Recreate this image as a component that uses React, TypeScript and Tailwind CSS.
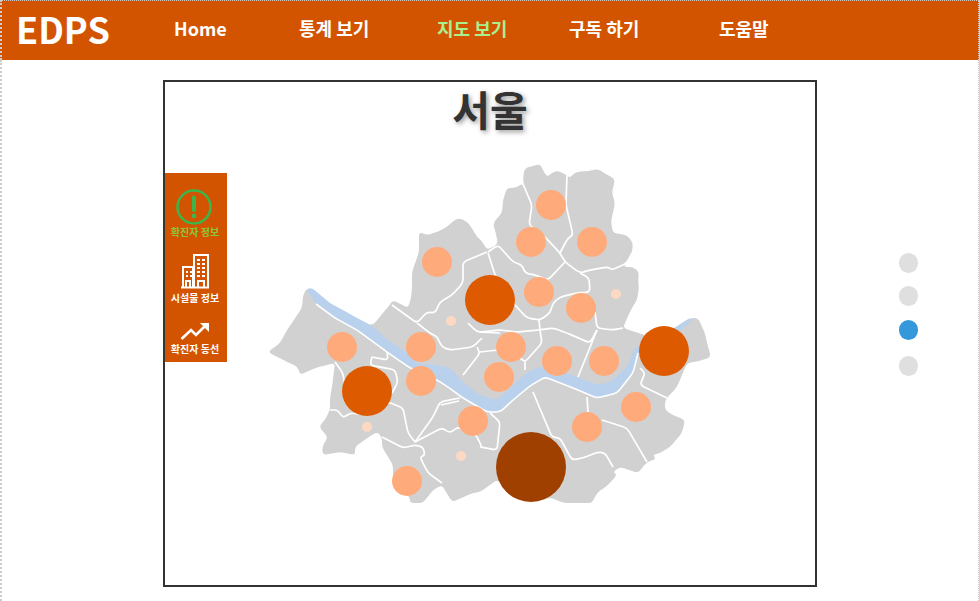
const navItems = [
  { label: "Home", width: "w-[125px]", active: false },
  { label: "통계 보기", width: "w-[138px]", active: false },
  { label: "지도 보기", width: "w-[132px]", active: true },
  { label: "구독 하기", width: "w-[150px]", active: false },
  { label: "도움말", width: "w-[100px]", active: false },
];

// rounds the corners of a hand traced outline so it doesn't look like a polygon
const rounded = (d: string) => {
  const closed = d.trim().endsWith("Z");
  const pts = (d.match(/-?\d+(\.\d+)?,-?\d+(\.\d+)?/g) ?? []).map((p) => p.split(",").map(Number));
  const n = pts.length;
  const cut = (a: number[], b: number[]) => {
    const len = Math.hypot(b[0] - a[0], b[1] - a[1]) || 1;
    const t = Math.min(0.45, 4 / len);
    return [a[0] + (b[0] - a[0]) * t, a[1] + (b[1] - a[1]) * t];
  };
  let out = "";
  pts.forEach((p, i) => {
    const prev = pts[(i - 1 + n) % n];
    const next = pts[(i + 1) % n];
    if (!closed && (i === 0 || i === n - 1)) {
      out += `${i === 0 ? "M" : "L"}${p[0]},${p[1]} `;
      return;
    }
    const a = cut(p, prev);
    const b = cut(p, next);
    out += `${i === 0 ? "M" : "L"}${a[0].toFixed(1)},${a[1].toFixed(1)} Q${p[0]},${p[1]} ${b[0].toFixed(1)},${b[1].toFixed(1)} `;
  });
  return closed ? out + "Z" : out;
};

const seoulOutline =
  "M419,232 L427,235 L437,232 L447,227 L453,221 L459,218 L466,221 L470,225 L477,237 L482,241 L487,250 L498,244 L496,234 L493,223 L502,213 L503,200 L507,188 L515,188 L522,184 L524,186 L523,177 L525,168 L533,166 L540,164 L543,170 L547,177 L553,172 L558,171 L567,175 L570,178 L575,172 L588,171 L598,169 L606,174 L615,179 L612,193 L615,203 L611,222 L613,233 L627,235 L633,243 L632,253 L623,267 L633,267 L639,272 L638,280 L639,288 L637,300 L632,308 L627,318 L623,328 L660,340 L675,328 L690,318 L698,318 L705,333 L707,343 L711,357 L700,361 L687,363 L682,375 L677,387 L665,400 L665,410 L673,415 L685,420 L682,433 L670,447 L660,453 L653,455 L656,459 L647,462 L638,473 L620,467 L613,472 L617,475 L608,485 L597,493 L592,503 L563,503 L552,498 L530,500 L497,480 L480,492 L473,493 L452,502 L442,485 L433,490 L423,503 L410,503 L410,497 L400,490 L393,480 L393,465 L382,447 L382,437 L377,432 L367,438 L355,447 L355,455 L340,452 L323,455 L322,447 L328,437 L319,427 L326,418 L330,410 L330,398 L332,387 L335,363 L315,368 L300,375 L298,367 L283,360 L268,352 L280,343 L287,330 L302,308 L303,295 L307,288 L340,320 L373,325 L388,307 L393,300 L408,308 L411,298 L412,288 L412,272 L419,252 Z";

const riverShape =
  "M306,289 L312,288 L330,303 L350,314 L372,326 L388,340 L407,353 L418,364 L432,364 L450,368 L466,385 L480,395 L497,400 L510,388 L525,374 L538,367 L567,373 L597,385 L610,382 L627,367 L635,347 L650,345 L677,326 L690,318 L692,320 L680,331 L660,352 L638,353 L633,373 L617,393 L597,398 L573,388 L545,377 L530,386 L513,400 L500,412 L487,412 L463,398 L448,387 L437,380 L410,368 L387,352 L357,330 L335,318 L316,304 Z";

// white borders between the districts
const borders = [
  "M523,184 L532,205 L529,225 L545,237 L560,253 L565,262 L580,273 L590,270 L608,267 L612,270 L627,263 L632,253",
  "M567,175 L566,205 L573,235 L568,238 L560,253",
  "M488,252 L498,245 L513,262 L522,265 L525,273 L535,275 L548,280 L565,262",
  "M580,273 L589,278 L590,292 L577,293 L560,297 L553,303 L550,313 L540,320 L527,318 L515,305",
  "M548,280 L538,292",
  "M595,312 L597,328 L613,330 L623,328",
  "M480,332 L500,330 L517,332 L539,330 L553,328 L567,333 L590,343 L597,330",
  "M539,320 L540,330 L542,343 L525,362 L520,358",
  "M525,362 L525,370",
  "M480,352 L497,350 L510,354 L520,358",
  "M597,330 L578,377",
  "M533,392 L552,437 L560,438 L572,460 L583,458 L598,452 L605,453 L613,467",
  "M587,397 L588,412",
  "M602,420 L627,428 L647,462",
  "M640,368 L645,373 L640,385 L667,398",
  "M490,413 L500,422 L497,450 L480,447 L482,447 L477,437",
  "M335,362 L343,373 L345,388",
  "M330,410 L338,410 L343,418 L350,413 L373,415 L388,402 L403,408 L408,433 L415,442",
  "M372,357 L370,365 L395,370 L398,382 L392,393",
  "M372,357 L388,360 L387,352",
  "M415,442 L433,417 L440,402 L460,398",
  "M441,405 L459,401",
  "M415,442 L442,428 L450,433 L458,427 L473,433 L477,437",
  "M382,437 L403,448 L415,445 L423,447 L425,455 L420,457 L428,473 L442,483",
  "M437,337 L442,347 L450,350 L473,347 L482,338",
  "M477,347 L480,353 L463,375",
  "M392,305 L417,323 L427,312 L435,313 L440,302 L452,295 L463,283 L463,262 L487,252",
  "M417,323 L430,333 L437,337",
  "M468,323 L477,332 L500,333",
  "M488,253 L500,290 L515,305",
];

const lightSpots = [
  [551, 205],
  [531, 242],
  [592, 242],
  [437, 262],
  [539, 292],
  [581, 308],
  [342, 347],
  [421, 347],
  [511, 347],
  [557, 361],
  [604, 361],
  [421, 381],
  [499, 377],
  [636, 407],
  [473, 421],
  [587, 427],
  [407, 481],
];

const midSpots = [
  [490, 300],
  [664, 351],
  [367, 391],
];

const paleSpots = [
  [616, 294],
  [451, 321],
  [367, 427],
  [461, 456],
];

const SeoulMap = () => (
  <svg width="588" height="360" viewBox="227 150 588 360" className="block shrink-0">
    <path d={rounded(seoulOutline)} fill="#d1d1d1" />
    {borders.map((d) => (
      <path key={d} d={rounded(d)} fill="none" stroke="#ffffff" strokeWidth="1.7" />
    ))}
    <path d={rounded(riverShape)} fill="#b9d1ec" />
    <path
      d={rounded("M316,304 L335,318 L357,330 L387,352 L410,368 L437,380 L448,387 L463,398 L487,412 L500,412 L513,400 L530,386 L545,377 L573,388 L597,398 L617,393 L633,373 L638,353")}
      fill="none"
      stroke="#ffffff"
      strokeWidth="1.6"
    />
    {paleSpots.map(([x, y]) => (
      <circle key={`${x}-${y}`} cx={x} cy={y} r="5" fill="#fdd9c3" />
    ))}
    {lightSpots.map(([x, y]) => (
      <circle key={`${x}-${y}`} cx={x} cy={y} r="15" fill="#ffaa7a" />
    ))}
    {midSpots.map(([x, y]) => (
      <circle key={`${x}-${y}`} cx={x} cy={y} r="25" fill="#dd5a00" />
    ))}
    <circle cx="531" cy="467" r="35" fill="#a04000" />
  </svg>
);

const SidePanel = () => (
  <div className="w-[62px] h-[189px] mt-[23px] pr-[2px] shrink-0 bg-[#d35400] flex flex-col items-center text-[10px] font-bold leading-[12px]">
    <svg width="36" height="36" viewBox="0 0 36 36" className="mt-[16px] -ml-[3px]">
      <circle cx="18" cy="18" r="16.5" fill="none" stroke="#3cb54a" strokeWidth="2.5" />
      <path d="M18 8.5 V21" stroke="#3cb54a" strokeWidth="4" strokeLinecap="round" />
      <circle cx="18" cy="27" r="2.4" fill="#3cb54a" />
    </svg>
    <span className="mt-[1px] text-[#8cc63f]">확진자 정보</span>
    <svg width="30" height="36" viewBox="0 0 30 36" className="mt-[15px]" fill="none" stroke="#ffffff" strokeWidth="2">
      <path d="M3 34.5 V14 H13 V34.5" />
      <path d="M14 34.5 V2 H28 V34.5" />
      <path d="M1 34.5 H29" />
      <path d="M6 19 H8 M10 19 H12 M6 23 H8 M10 23 H12 M17 7 H20 M22 7 H25 M17 11 H20 M22 11 H25 M17 15 H20 M22 15 H25 M17 19 H20 M22 19 H25 M17 23 H20 M22 23 H25" />
      <path d="M6 34 V28 H10 V34 M18 34 V28 H24 V34" />
    </svg>
    <span className="mt-[3px] text-white">시설물 정보</span>
    <svg width="30" height="20" viewBox="0 0 30 20" className="mt-[17px]" fill="none">
      <path d="M1.5 18 L11 9 L16 14 L26 4" stroke="#ffffff" strokeWidth="2.6" />
      <path d="M20 2 H29 V11 Z" fill="#ffffff" />
    </svg>
    <span className="mt-[2px] text-white">확진자 동선</span>
  </div>
);

const App = () => {
  return (
    <div className="h-[601px] overflow-hidden bg-white font-['Noto_Sans_CJK_KR','Noto_Sans',sans-serif]">
      {/* top bar, the dotted page border sits on its background */}
      <header className="h-[60px] pb-[5px] bg-[#d35400] flex items-center text-white border-t border-l-2 border-r border-dotted border-[#cccccc]">
        <div className="w-[172px] pl-[14px] text-[36px] font-bold leading-none">EDPS</div>
        <nav className="flex items-center text-[18px] font-bold leading-none">
          {navItems.map((item) => (
            <a key={item.label} className={`${item.width} ${item.active ? "text-[#a9f08f]" : "text-white"}`}>
              {item.label}
            </a>
          ))}
        </nav>
      </header>

      <main className="h-[541px] flex pt-[20px] border-l-2 border-r border-dotted border-[#cccccc]">
        <section className="w-[654px] h-[507px] ml-[161px] shrink-0 border-2 border-[#333333] flex flex-col">
          <h1 className="h-[68px] text-center text-[41px] font-bold leading-[52px] text-[#333333] [text-shadow:2px_2px_5px_#999999]">
            서울
          </h1>
          <div className="flex">
            <SidePanel />
            <SeoulMap />
          </div>
        </section>

        {/* page dots */}
        <div className="ml-[82px] mt-[173px] flex flex-col w-[19px]">
          <span className="h-[20px] rounded-full bg-[#dfdfdf]" />
          <span className="h-[20px] mt-[13px] rounded-full bg-[#dfdfdf]" />
          <span className="h-[20px] mt-[14px] rounded-full bg-[#3498db]" />
          <span className="h-[20px] mt-[16px] rounded-full bg-[#dfdfdf]" />
        </div>
      </main>
    </div>
  );
};

export default App;
